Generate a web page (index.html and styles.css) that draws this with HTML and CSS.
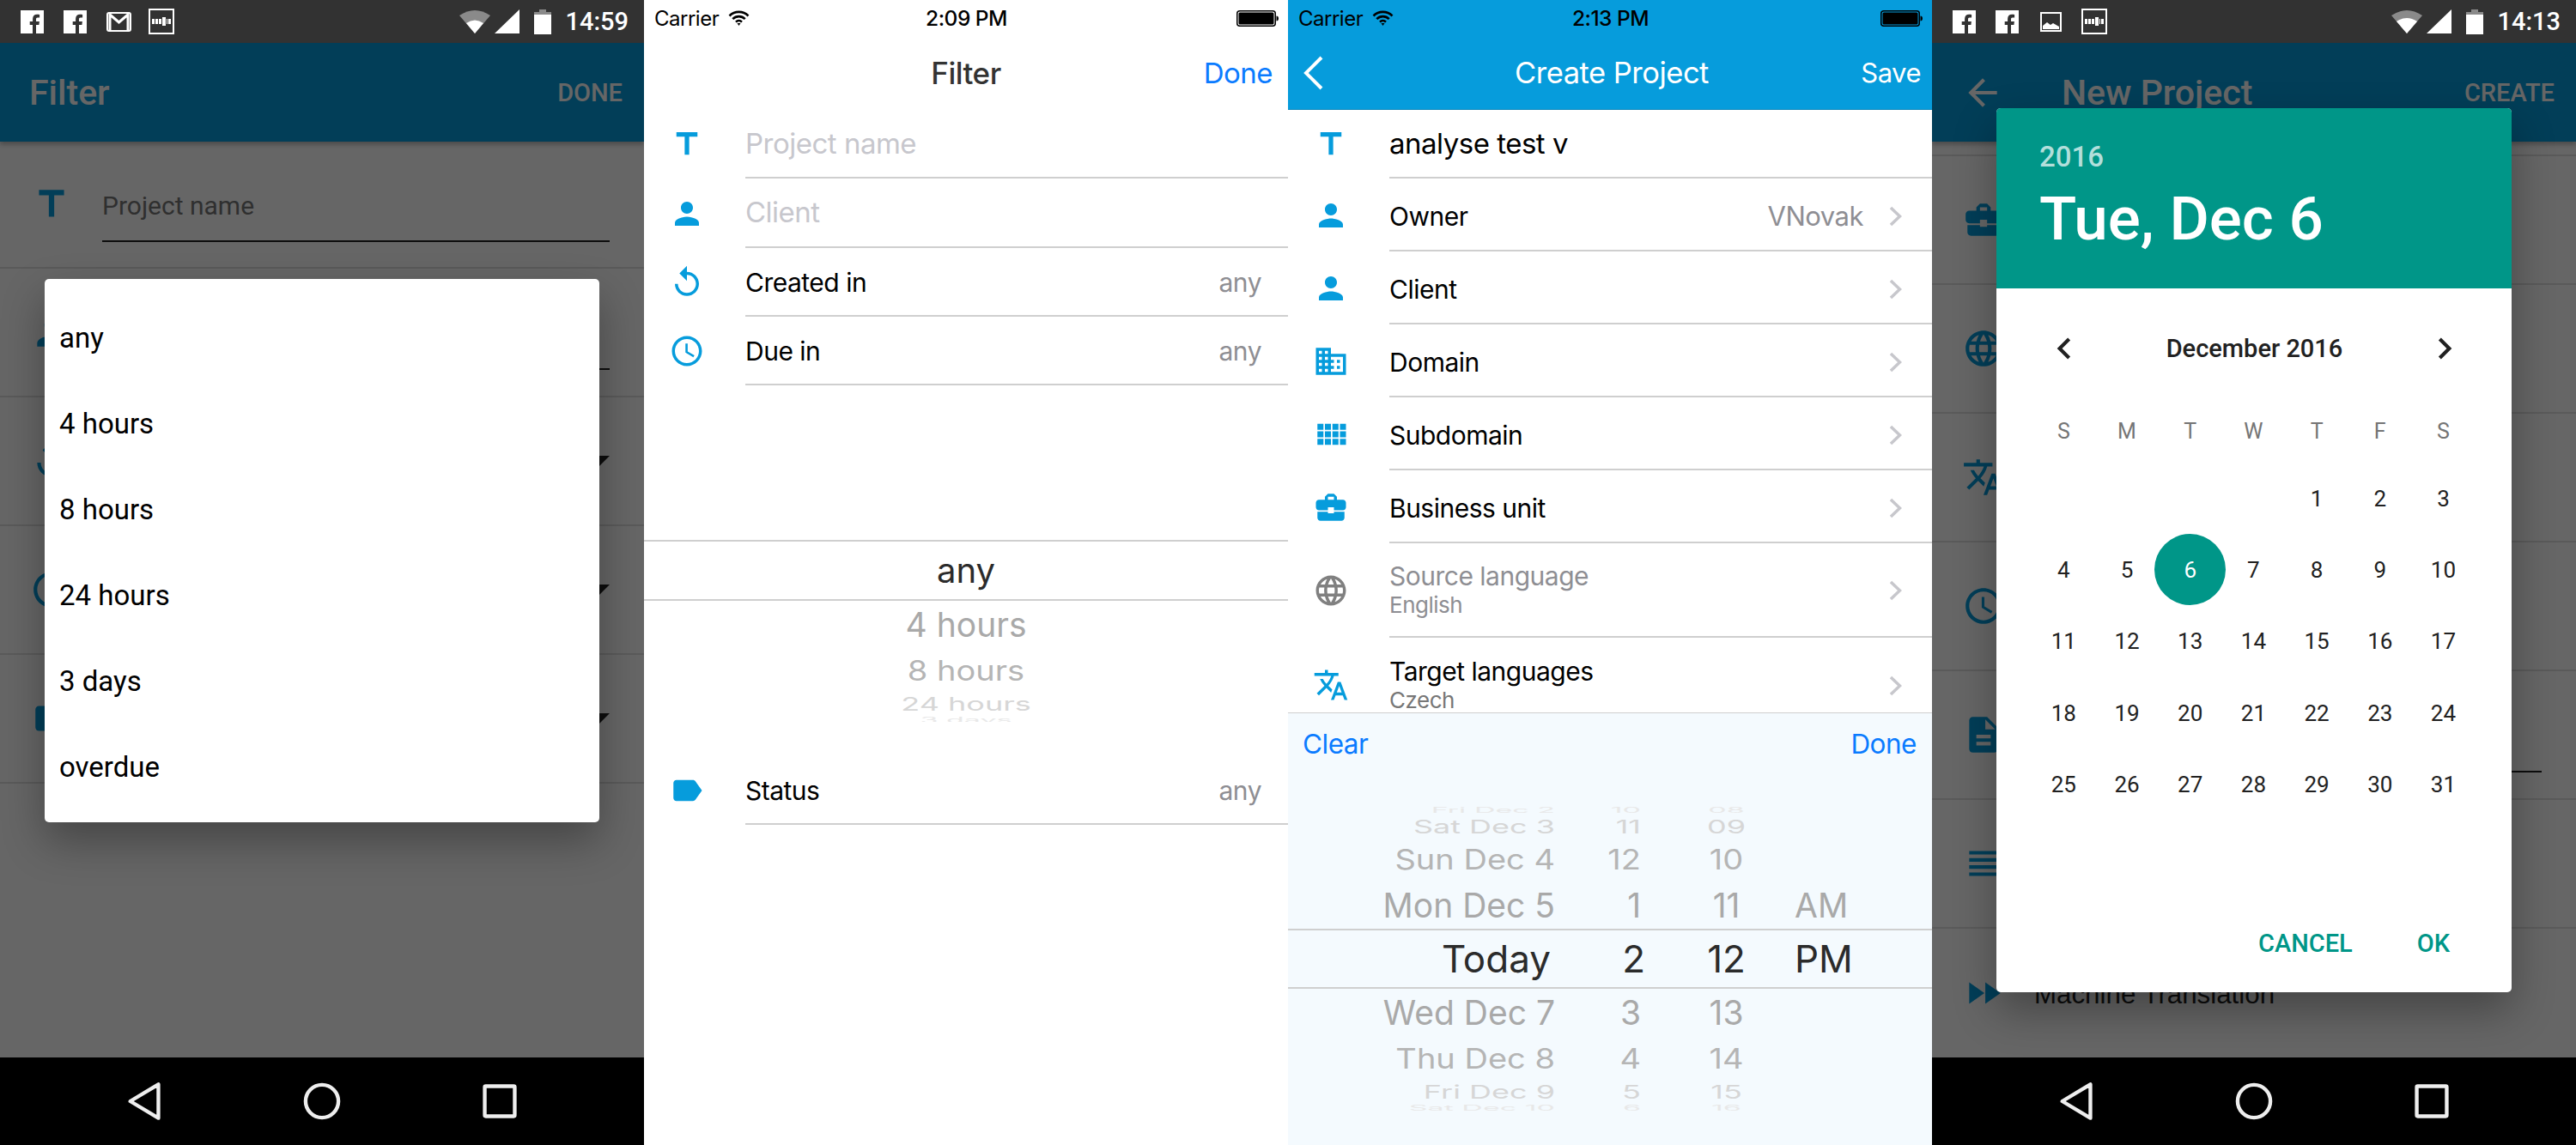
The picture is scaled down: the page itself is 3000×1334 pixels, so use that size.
FILE: index.html
```html
<!DOCTYPE html>
<html lang="en">
<head>
    <meta charset="UTF-8" />
    <title>Project screens</title>
    <link rel="stylesheet" href="styles.css">
</head>
<body>

<svg class="sprite" xmlns="http://www.w3.org/2000/svg">
    <symbol id="i-title" viewBox="0 0 24 24"><path d="M5 4v3h5.500v12h3V7H19V4z"/></symbol>
    <symbol id="i-person" viewBox="0 0 24 24"><path d="M12 12c2.210 0 4-1.790 4-4s-1.790-4-4-4-4 1.790-4 4 1.790 4 4 4zm0 2c-2.670 0-8 1.340-8 4v2h16v-2c0-2.660-5.330-4-8-4z"/></symbol>
    <symbol id="i-replay" viewBox="0 0 24 24"><path d="M12 5V1L7 6l5 5V7c3.310 0 6 2.690 6 6s-2.690 6-6 6-6-2.690-6-6H4c0 4.420 3.580 8 8 8s8-3.580 8-8-3.580-8-8-8z"/></symbol>
    <symbol id="i-clock" viewBox="0 0 24 24"><path d="M11.990 2C6.470 2 2 6.480 2 12s4.470 10 9.990 10C17.520 22 22 17.520 22 12S17.520 2 11.990 2zM12 20c-4.420 0-8-3.580-8-8s3.580-8 8-8 8 3.580 8 8-3.580 8-8 8zm.5-13H11v6l5.250 3.150.75-1.230-4.500-2.670z"/></symbol>
    <symbol id="i-label" viewBox="0 0 24 24"><path d="M17.630 5.840C17.270 5.330 16.670 5 16 5L5 5.010C3.900 5.010 3 5.900 3 7v10c0 1.100.9 1.990 2 1.990L16 19c.67 0 1.270-.33 1.630-.84L22 12l-4.370-6.160z"/></symbol>
    <symbol id="i-domain" viewBox="0 0 24 24"><path d="M12 7V3H2v18h20V7H12zM6 19H4v-2h2v2zm0-4H4v-2h2v2zm0-4H4V9h2v2zm0-4H4V5h2v2zm4 12H8v-2h2v2zm0-4H8v-2h2v2zm0-4H8V9h2v2zm0-4H8V5h2v2zm10 12h-8v-2h2v-2h-2v-2h2v-2h-2V9h8v10zm-2-8h-2v2h2v-2zm0 4h-2v2h2v-2z"/></symbol>
    <symbol id="i-grid" viewBox="0 0 24 24"><path d="M3 9h4V5H3v4zm0 5h4v-4H3v4zm5 0h4v-4H8v4zm5 0h4v-4h-4v4zM8 9h4V5H8v4zm5-4v4h4V5h-4zm5 9h4v-4h-4v4zM3 19h4v-4H3v4zm5 0h4v-4H8v4zm5 0h4v-4h-4v4zm5 0h4v-4h-4v4zm0-14v4h4V5h-4z"/></symbol>
    <symbol id="i-case" viewBox="0 0 24 24"><path d="M10 16v-1H3.010L3 19c0 1.110.89 2 2 2h14c1.110 0 2-.89 2-2v-4h-7v1h-4zm10-9h-4.010V5l-2-2h-4l-2 2v2H4c-1.100 0-2 .9-2 2v3c0 1.110.89 2 2 2h6v-2h4v2h6c1.100 0 2-.9 2-2V9c0-1.100-.9-2-2-2zm-6 0h-4V5h4v2z"/></symbol>
    <symbol id="i-globe" viewBox="0 0 24 24"><path d="M11.990 2C6.470 2 2 6.480 2 12s4.470 10 9.990 10C17.520 22 22 17.520 22 12S17.520 2 11.990 2zm6.930 6h-2.950c-.32-1.250-.78-2.450-1.380-3.560 1.840.63 3.370 1.910 4.330 3.560zM12 4.040c.83 1.200 1.480 2.530 1.910 3.960h-3.820c.43-1.430 1.080-2.760 1.910-3.960zM4.260 14C4.100 13.360 4 12.690 4 12s.1-1.360.26-2h3.380c-.08.66-.14 1.320-.14 2 0 .68.06 1.340.14 2H4.260zm.82 2h2.950c.32 1.250.78 2.450 1.380 3.560-1.840-.63-3.370-1.900-4.330-3.560zm2.950-8H5.080c.96-1.660 2.490-2.930 4.330-3.560C8.810 5.550 8.350 6.750 8.030 8zM12 19.960c-.83-1.200-1.480-2.530-1.910-3.960h3.820c-.43 1.430-1.080 2.760-1.910 3.960zM14.340 14H9.660c-.09-.66-.16-1.320-.16-2 0-.68.07-1.350.16-2h4.680c.09.65.16 1.320.16 2 0 .68-.07 1.340-.16 2zm.25 5.560c.6-1.110 1.060-2.310 1.380-3.560h2.950c-.96 1.650-2.490 2.930-4.330 3.560zM16.360 14c.08-.66.14-1.320.14-2 0-.68-.06-1.340-.14-2h3.380c.16.64.26 1.310.26 2s-.1 1.360-.26 2h-3.380z"/></symbol>
    <symbol id="i-translate" viewBox="0 0 24 24"><path d="M12.870 15.070l-2.540-2.510.03-.03c1.740-1.940 2.980-4.170 3.710-6.530H17V4h-7V2H8v2H1v1.990h11.170C11.500 7.920 10.440 9.750 9 11.350 8.070 10.320 7.300 9.190 6.690 8h-2c.73 1.630 1.730 3.170 2.980 4.560l-5.090 5.020L4 19l5-5 3.110 3.110.76-2.040zM18.500 10h-2L12 22h2l1.120-3h4.750L21 22h2l-4.500-12zm-2.620 7l1.620-4.330L19.120 17h-3.240z"/></symbol>
    <symbol id="i-doc" viewBox="0 0 24 24"><path d="M14 2H6c-1.100 0-1.990.9-1.990 2L4 20c0 1.100.89 2 1.990 2H18c1.100 0 2-.9 2-2V8l-6-6zm2 16H8v-2h8v2zm0-4H8v-2h8v2zm-3-5V3.500L18.500 9H13z"/></symbol>
    <symbol id="i-lines" viewBox="0 0 24 24"><path d="M4 15h16v-2H4v2zm0 4h16v-2H4v2zm0-8h16V9H4v2zm0-6v2h16V5H4z"/></symbol>
    <symbol id="i-forward" viewBox="0 0 24 24"><path d="M4 18l8.500-6L4 6v12zm9-12v12l8.500-6L13 6z"/></symbol>
    <symbol id="i-arrow-back" viewBox="0 0 24 24"><path d="M20 11H7.830l5.590-5.590L12 4l-8 8 8 8 1.410-1.410L7.830 13H20v-2z"/></symbol>
    <symbol id="i-prev" viewBox="0 0 24 24"><path d="M15.410 7.410L14 6l-6 6 6 6 1.410-1.410L10.830 12z"/></symbol>
    <symbol id="i-next" viewBox="0 0 24 24"><path d="M10 6L8.590 7.410 13.170 12l-4.580 4.590L10 18l6-6z"/></symbol>
    <symbol id="i-chevron" viewBox="0 0 15 24"><path d="M2 2l10.500 10L2 22" fill="none" stroke="#c7c7cc" stroke-width="3.500"/></symbol>

    <symbol id="s-fb" viewBox="0 0 27 27"><path fill-rule="evenodd" fill="#fff" d="M0 0h27v27H0z M18 27V17h3.400l.5-4H18v-2.500c0-1.200.3-2 2-2h2.100V5c-.4 0-1.600-.2-3-.2-3 0-5 1.800-5 5.200v3h-3.400v4H14v10z"/></symbol>
    <symbol id="s-mail" viewBox="0 0 29 23"><rect x="1" y="1" width="27" height="21" rx="2" fill="none" stroke="#fff" stroke-width="2"/><path d="M4 21V3l10.500 9L25 3v18" fill="none" stroke="#fff" stroke-width="3"/></symbol>
    <symbol id="s-photo" viewBox="0 0 25 23"><rect x="1" y="1" width="23" height="21" fill="none" stroke="#fff" stroke-width="2"/><path fill="#fff" d="M3 20v-4l5-4 4 3 3-2 7 4v3z"/></symbol>
    <symbol id="s-box" viewBox="0 0 30 30"><rect x="1" y="1" width="28" height="28" fill="none" stroke="#fff" stroke-width="2"/><path fill="#fff" d="M4 12h3v6H4zm4 0h3v6H8zm4 0h3v6h-3zm4-2h4v10h-4zm5 2h1v6h-1zm2 0h3v6h-3z"/></symbol>
    <symbol id="s-wifi" viewBox="0 0 36 28"><path fill="#8a8a8a" d="M0 7Q18-5 36 7L18 28z"/><path class="wifi-level" fill="#fff" d="M8 16Q18 9 28 16L18 28z"/></symbol>
    <symbol id="s-wifi-full" viewBox="0 0 36 28"><path fill="#8a8a8a" d="M0 7Q18-5 36 7L18 28z"/><path fill="#fff" d="M6 14Q18 6 30 14L18 28z"/></symbol>
    <symbol id="s-signal" viewBox="0 0 29 28"><path fill="#fff" d="M29 0v28H0z"/></symbol>
    <symbol id="s-battery" viewBox="0 0 20 29"><path fill="#8a8a8a" d="M6 0h8v3h6v5H0V3h6z"/><path fill="#fff" d="M0 6h20v23H0z"/></symbol>
    <symbol id="s-ios-wifi" viewBox="0 0 25 18"><path d="M1.500 6.500a15.500 15.500 0 0 1 22 0M5.300 10.200a10 10 0 0 1 14.400 0M9 13.600a5 5 0 0 1 7 0" fill="none" stroke="#000" stroke-width="2.600"/><path d="M10.500 15h4l-2 3z"/></symbol>
    <symbol id="s-ios-battery" viewBox="0 0 49 19"><rect x=".75" y=".75" width="44.500" height="17.500" rx="3" fill="none" stroke="#000" stroke-width="1.500"/><rect x="2.500" y="2.500" width="41" height="14" rx="1.500"/><path d="M46.500 6.500c1.500 0 2.500 1 2.500 3s-1 3-2.500 3z"/></symbol>
</svg>

<div class="screens">

    <!-- android filter, select dialog open -->
    <section class="screen android">
        <div class="an-status">
            <svg class="st-fb"><use href="#s-fb"/></svg>
            <svg class="st-fb"><use href="#s-fb"/></svg>
            <svg class="st-mail"><use href="#s-mail"/></svg>
            <svg class="st-box"><use href="#s-box"/></svg>
            <div class="st-right">
                <svg class="st-wifi"><use href="#s-wifi"/></svg>
                <svg class="st-signal"><use href="#s-signal"/></svg>
                <svg class="st-battery"><use href="#s-battery"/></svg>
                <span class="st-time">14:59</span>
            </div>
        </div>
        <div class="an-main">
            <header class="an-toolbar">
                <h1 class="an-title">Filter</h1>
                <span class="an-action">DONE</span>
            </header>
            <div class="an-row an-row-first">
                <svg class="an-icon"><use href="#i-title"/></svg>
                <div class="an-field"><span class="an-placeholder">Project name</span></div>
            </div>
            <div class="an-row">
                <svg class="an-icon"><use href="#i-person"/></svg>
                <div class="an-field"></div>
            </div>
            <div class="an-row">
                <svg class="an-icon"><use href="#i-replay"/></svg>
                <i class="an-caret"></i>
            </div>
            <div class="an-row">
                <svg class="an-icon"><use href="#i-clock"/></svg>
                <i class="an-caret"></i>
            </div>
            <div class="an-row">
                <svg class="an-icon"><use href="#i-label"/></svg>
                <i class="an-caret"></i>
            </div>
            <div class="scrim"></div>
            <ul class="select-dialog">
                <li>any</li>
                <li>4 hours</li>
                <li>8 hours</li>
                <li>24 hours</li>
                <li>3 days</li>
                <li>overdue</li>
            </ul>
        </div>
        <nav class="an-nav">
            <svg class="nav-icon" viewBox="0 0 40 44"><path d="M36 4v36L6 22z"/></svg>
            <svg class="nav-icon" viewBox="0 0 40 44"><circle cx="20" cy="22" r="17.500"/></svg>
            <svg class="nav-icon" viewBox="0 0 40 44"><rect x="4" y="6" width="32" height="32" rx="1"/></svg>
        </nav>
    </section>

    <!-- ios filter, wheel open -->
    <section class="screen ios">
        <div class="ios-status">
            <div class="ios-carrier">Carrier <svg class="ios-wifi"><use href="#s-ios-wifi"/></svg></div>
            <div class="ios-clock">2:09 PM</div>
            <svg class="ios-battery"><use href="#s-ios-battery"/></svg>
        </div>
        <div class="ios-nav">
            <span></span>
            <h1 class="ios-title">Filter</h1>
            <span class="ios-done">Done</span>
        </div>
        <div class="ios-row">
            <svg class="ios-icon"><use href="#i-title"/></svg>
            <div class="ios-body"><span class="ios-placeholder">Project name</span></div>
        </div>
        <div class="ios-row ios-row-wide">
            <svg class="ios-icon"><use href="#i-person"/></svg>
            <div class="ios-body"><span class="ios-placeholder">Client</span></div>
        </div>
        <div class="ios-row">
            <svg class="ios-icon"><use href="#i-replay"/></svg>
            <div class="ios-body"><span>Created in</span><span class="ios-value">any</span></div>
        </div>
        <div class="ios-row">
            <svg class="ios-icon"><use href="#i-clock"/></svg>
            <div class="ios-body"><span>Due in</span><span class="ios-value">any</span></div>
        </div>
        <div class="wheel wheel-single">
            <div class="w0 wheel-sel"><span>any</span></div>
            <div class="w1"><span>4 hours</span></div>
            <div class="w2"><span>8 hours</span></div>
            <div class="w3"><span>24 hours</span></div>
            <div class="w4"><span>3 days</span></div>
        </div>
        <div class="ios-row">
            <svg class="ios-icon"><use href="#i-label"/></svg>
            <div class="ios-body"><span>Status</span><span class="ios-value">any</span></div>
        </div>
    </section>

    <!-- ios create project, date wheel open -->
    <section class="screen ios">
        <div class="ios-blue">
            <div class="ios-status">
                <div class="ios-carrier">Carrier <svg class="ios-wifi"><use href="#s-ios-wifi"/></svg></div>
                <div class="ios-clock">2:13 PM</div>
                <svg class="ios-battery"><use href="#s-ios-battery"/></svg>
            </div>
            <div class="ios-nav ios-nav-blue">
                <svg class="ios-back" viewBox="0 0 24 40"><path d="M22 2L4 20l18 18"/></svg>
                <h1 class="ios-title">Create Project</h1>
                <span class="ios-save">Save</span>
            </div>
        </div>
        <div class="ios-list">
            <div class="ios-row">
                <svg class="ios-icon"><use href="#i-title"/></svg>
                <div class="ios-body"><span class="ios-input">analyse test v</span></div>
            </div>
            <div class="ios-row ios-row-link">
                <svg class="ios-icon"><use href="#i-person"/></svg>
                <div class="ios-body"><span>Owner</span><span class="ios-owner">VNovak</span><svg class="ios-chevron"><use href="#i-chevron"/></svg></div>
            </div>
            <div class="ios-row ios-row-link">
                <svg class="ios-icon"><use href="#i-person"/></svg>
                <div class="ios-body"><span>Client</span><svg class="ios-chevron"><use href="#i-chevron"/></svg></div>
            </div>
            <div class="ios-row ios-row-link">
                <svg class="ios-icon"><use href="#i-domain"/></svg>
                <div class="ios-body"><span>Domain</span><svg class="ios-chevron"><use href="#i-chevron"/></svg></div>
            </div>
            <div class="ios-row ios-row-link">
                <svg class="ios-icon"><use href="#i-grid"/></svg>
                <div class="ios-body"><span>Subdomain</span><svg class="ios-chevron"><use href="#i-chevron"/></svg></div>
            </div>
            <div class="ios-row ios-row-link">
                <svg class="ios-icon"><use href="#i-case"/></svg>
                <div class="ios-body"><span>Business unit</span><svg class="ios-chevron"><use href="#i-chevron"/></svg></div>
            </div>
            <div class="ios-row ios-row-two">
                <svg class="ios-icon ios-icon-off"><use href="#i-globe"/></svg>
                <div class="ios-body">
                    <div class="ios-two ios-two-off"><span>Source language</span><small>English</small></div>
                    <svg class="ios-chevron"><use href="#i-chevron"/></svg>
                </div>
            </div>
            <div class="ios-row ios-row-two">
                <svg class="ios-icon"><use href="#i-translate"/></svg>
                <div class="ios-body">
                    <div class="ios-two"><span>Target languages</span><small>Czech</small></div>
                    <svg class="ios-chevron"><use href="#i-chevron"/></svg>
                </div>
            </div>
        </div>
        <div class="date-picker">
            <div class="date-bar"><span>Clear</span><span>Done</span></div>
            <div class="wheel wheel-date">
                <div class="w4 up"><span>Fri Dec 2</span><span>10</span><span>08</span><span></span></div>
                <div class="w3 up"><span>Sat Dec 3</span><span>11</span><span>09</span><span></span></div>
                <div class="w2 up"><span>Sun Dec 4</span><span>12</span><span>10</span><span></span></div>
                <div class="w1"><span>Mon Dec 5</span><span>1</span><span>11</span><span>AM</span></div>
                <div class="w0 wheel-sel"><span>Today</span><span>2</span><span>12</span><span>PM</span></div>
                <div class="w1"><span>Wed Dec 7</span><span>3</span><span>13</span><span></span></div>
                <div class="w2"><span>Thu Dec 8</span><span>4</span><span>14</span><span></span></div>
                <div class="w3"><span>Fri Dec 9</span><span>5</span><span>15</span><span></span></div>
                <div class="w4"><span>Sat Dec 10</span><span>6</span><span>16</span><span></span></div>
            </div>
        </div>
    </section>

    <!-- android new project, calendar dialog open -->
    <section class="screen android">
        <div class="an-status">
            <svg class="st-fb"><use href="#s-fb"/></svg>
            <svg class="st-fb"><use href="#s-fb"/></svg>
            <svg class="st-photo"><use href="#s-photo"/></svg>
            <svg class="st-box"><use href="#s-box"/></svg>
            <div class="st-right">
                <svg class="st-wifi"><use href="#s-wifi-full"/></svg>
                <svg class="st-signal"><use href="#s-signal"/></svg>
                <svg class="st-battery"><use href="#s-battery"/></svg>
                <span class="st-time">14:13</span>
            </div>
        </div>
        <div class="an-main">
            <header class="an-toolbar">
                <svg class="an-back"><use href="#i-arrow-back"/></svg>
                <h1 class="an-title">New Project</h1>
                <span class="an-action">CREATE</span>
            </header>
            <div class="an-row an-row-cut"></div>
            <div class="an-row"><svg class="an-icon"><use href="#i-case"/></svg></div>
            <div class="an-row"><svg class="an-icon"><use href="#i-globe"/></svg></div>
            <div class="an-row"><svg class="an-icon"><use href="#i-translate"/></svg></div>
            <div class="an-row"><svg class="an-icon"><use href="#i-clock"/></svg></div>
            <div class="an-row">
                <svg class="an-icon"><use href="#i-doc"/></svg>
                <div class="an-field"></div>
            </div>
            <div class="an-row"><svg class="an-icon"><use href="#i-lines"/></svg></div>
            <div class="an-row an-row-last">
                <svg class="an-icon"><use href="#i-forward"/></svg>
                <span class="an-text">Machine Translation</span>
            </div>
            <div class="scrim"></div>
            <div class="cal-dialog">
                <div class="cal-head">
                    <div class="cal-year">2016</div>
                    <div class="cal-date">Tue, Dec 6</div>
                </div>
                <div class="cal-month">
                    <svg class="cal-arrow"><use href="#i-prev"/></svg>
                    <span>December 2016</span>
                    <svg class="cal-arrow"><use href="#i-next"/></svg>
                </div>
                <div class="cal-week">
                    <span>S</span><span>M</span><span>T</span><span>W</span><span>T</span><span>F</span><span>S</span>
                </div>
                <div class="cal-days">
                    <span></span><span></span><span></span><span></span><span>1</span><span>2</span><span>3</span>
                    <span>4</span><span>5</span><span class="cal-today">6</span><span>7</span><span>8</span><span>9</span><span>10</span>
                    <span>11</span><span>12</span><span>13</span><span>14</span><span>15</span><span>16</span><span>17</span>
                    <span>18</span><span>19</span><span>20</span><span>21</span><span>22</span><span>23</span><span>24</span>
                    <span>25</span><span>26</span><span>27</span><span>28</span><span>29</span><span>30</span><span>31</span>
                </div>
                <div class="cal-actions"><span>CANCEL</span><span>OK</span></div>
            </div>
        </div>
        <nav class="an-nav">
            <svg class="nav-icon" viewBox="0 0 40 44"><path d="M36 4v36L6 22z"/></svg>
            <svg class="nav-icon" viewBox="0 0 40 44"><circle cx="20" cy="22" r="17.500"/></svg>
            <svg class="nav-icon" viewBox="0 0 40 44"><rect x="4" y="6" width="32" height="32" rx="1"/></svg>
        </nav>
    </section>

</div>

</body>
</html>
```

FILE: styles.css
```css
* {
    box-sizing: border-box;
}
html, body {
    margin: 0;
    background: #fff;
}
h1 {
    margin: 0;
    font: inherit;
}
.sprite {
    display: none;
}
.screens {
    display: grid;
    grid-template-columns: repeat(4, 750px);
    width: 3000px;
    height: 1334px;
    overflow: hidden;
}
.screen {
    display: flex;
    flex-direction: column;
    height: 1334px;
    overflow: hidden;
}

/* android */
.android {
    font-family: Roboto, sans-serif;
    background: #fff;
}
.an-status {
    display: flex;
    align-items: center;
    flex: none;
    height: 50px;
    padding: 0 18px 0 24px;
    background: #323232;
}
.st-fb {
    width: 27px;
    height: 27px;
    margin-right: 23px;
}
.st-mail {
    width: 29px;
    height: 23px;
    margin-right: 20px;
}
.st-photo {
    width: 25px;
    height: 23px;
    margin: 0 23px 0 2px;
}
.st-box {
    width: 30px;
    height: 30px;
}
.st-right {
    display: flex;
    align-items: center;
    margin-left: auto;
}
.st-wifi {
    width: 36px;
    height: 28px;
    margin-right: 5px;
}
.st-signal {
    width: 29px;
    height: 28px;
    margin-right: 17px;
}
.st-battery {
    width: 20px;
    height: 29px;
    margin-right: 16px;
}
.st-time {
    color: #fff;
    font-size: 29px;
    font-weight: 500;
}
.an-main {
    position: relative;
    flex: 1;
    overflow: hidden;
}
.an-toolbar {
    display: flex;
    align-items: center;
    height: 115px;
    padding: 0 25px 0 34px;
    background: #069cdc;
    color: #fff;
    box-shadow: 0 3px 6px rgba(0,0,0,0.3);
}
.an-back {
    width: 50px;
    height: 50px;
    margin-right: 67px;
    fill: #fff;
}
.an-title {
    font-size: 41px;
    font-weight: 500;
}
.an-action {
    margin-left: auto;
    font-size: 29px;
    font-weight: 500;
}
.an-row {
    display: flex;
    align-items: center;
    height: 150px;
    padding: 0 40px 0 35px;
    border-bottom: 2px solid #e0e0e0;
}
.an-row-first {
    height: 148px;
}
.an-row-cut {
    height: 17px;
}
.an-row-last {
    border-bottom: 0;
}
.an-icon {
    flex: none;
    width: 50px;
    height: 50px;
    fill: #069cdc;
}
.an-field {
    display: flex;
    align-items: center;
    align-self: flex-start;
    flex: 1;
    height: 118px;
    margin-left: 34px;
    padding-top: 33px;
    border-bottom: 2px solid #222;
}
.an-row-first .an-field {
    height: 117px;
}
.an-placeholder {
    color: #777;
    font-size: 30px;
}
.an-text {
    margin: 4px 0 0 34px;
    color: #222;
    font-family: "Liberation Sans", sans-serif;
    font-size: 31.300px;
}
.an-caret {
    width: 0;
    height: 0;
    margin-left: auto;
    border-top: 12px solid #222;
    border-left: 12px solid transparent;
    border-right: 12px solid transparent;
}
.scrim {
    position: absolute;
    inset: 0;
    background: rgba(0,0,0,0.6);
}
.an-nav {
    display: flex;
    flex: none;
    align-items: center;
    justify-content: space-between;
    height: 102px;
    padding: 0 146px 0 145px;
    background: #000;
}
.nav-icon {
    width: 44px;
    height: 48px;
    fill: none;
    stroke: #eee;
    stroke-width: 4;
    stroke-linejoin: round;
}

/* select dialog */
.select-dialog {
    position: absolute;
    top: 275px;
    left: 52px;
    width: 646px;
    height: 633px;
    margin: 0;
    padding: 18px 0 0 17px;
    list-style: none;
    background: #fff;
    border-radius: 5px;
    color: #000;
    font-size: 33px;
    box-shadow: 0 22px 50px rgba(0,0,0,0.32);
}
.select-dialog li {
    display: flex;
    align-items: center;
    height: 100px;
}

/* calendar dialog */
.cal-dialog {
    position: absolute;
    top: 76px;
    left: 75px;
    display: flex;
    flex-direction: column;
    width: 600px;
    height: 1030px;
    background: #fff;
    border-radius: 5px;
    overflow: visible;
    box-shadow: 0 22px 50px rgba(0,0,0,0.32);
}
.cal-head {
    height: 210px;
    padding: 38px 50px 0;
    background: #009688;
    border-radius: 5px 5px 0 0;
    color: #fff;
}
.cal-year {
    color: #b2dfdb;
    font-size: 33px;
    font-weight: 500;
    line-height: 38px;
}
.cal-date {
    margin-top: 11px;
    font-size: 71px;
    font-weight: 500;
    line-height: 84px;
}
.cal-month {
    display: flex;
    align-items: center;
    justify-content: space-between;
    height: 60px;
    margin-top: 40px;
    padding: 0 53px 0 54px;
    color: #212121;
    font-size: 29px;
    font-weight: 500;
}
.cal-arrow {
    width: 50px;
    height: 50px;
    fill: #212121;
}
.cal-week, .cal-days {
    display: grid;
    grid-template-columns: repeat(7, 73.7px);
    margin-left: 41.5px;
    text-align: center;
}
.cal-week {
    height: 70px;
    margin-top: 31px;
    color: #757575;
    font-size: 25px;
    align-items: center;
}
.cal-days {
    grid-auto-rows: 83.4px;
    margin-top: 2px;
    color: #212121;
    font-size: 26px;
}
.cal-days span {
    display: flex;
    align-items: center;
    justify-content: center;
}
.cal-days .cal-today {
    width: 83px;
    height: 83px;
    margin-left: -4.6px;
    background: #009688;
    border-radius: 50%;
    color: #fff;
}
.cal-actions {
    display: flex;
    justify-content: flex-end;
    gap: 75px;
    margin-top: auto;
    padding: 0 72px 42px 0;
    color: #009688;
    font-size: 29px;
    font-weight: 500;
    line-height: 30px;
}

/* ios */
.ios {
    font-family: Inter, sans-serif;
    background: #fff;
    color: #000;
    font-size: 30px;
    letter-spacing: -0.5px;
}
.ios-status {
    display: grid;
    grid-template-columns: 1fr auto 1fr;
    align-items: center;
    height: 42px;
    padding: 0 11px 0 12px;
    color: #000;
    font-size: 24px;
}
.ios-carrier {
    display: flex;
    align-items: center;
    gap: 11px;
}
.ios-wifi {
    width: 25px;
    height: 18px;
}
.ios-clock {
    font-size: 24.500px;
    font-weight: 500;
}
.ios-battery {
    justify-self: end;
    width: 49px;
    height: 19px;
}
.ios-nav {
    display: grid;
    grid-template-columns: 1fr auto 1fr;
    align-items: center;
    height: 86px;
    padding: 0 18px;
}
.ios-title {
    font-size: 35px;
    font-weight: 500;
    color: #333;
}
.ios-done {
    justify-self: end;
    color: #0a7bff;
    font-size: 33px;
}
.ios-blue {
    background: #069cdc;
    border-bottom: 1px solid #0785ba;
    height: 128px;
}
.ios-nav-blue {
    height: 85px;
    padding: 0 13px 0 17px;
}
.ios-nav-blue .ios-title {
    color: #fff;
    font-size: 34.500px;
    font-weight: 400;
}
.ios-save {
    justify-self: end;
    color: #fff;
    font-size: 31px;
}
.ios-back {
    width: 24px;
    height: 40px;
    fill: none;
    stroke: #fff;
    stroke-width: 4;
}
.ios-row {
    display: flex;
    height: 80px;
    flex: none;
}
.ios-row-wide {
    height: 81px;
}
.ios-row-link {
    height: 85px;
}
.ios-row-two {
    height: 110px;
}
.ios-icon {
    flex: none;
    width: 42px;
    height: 42px;
    margin: auto 47px auto 29px;
    fill: #069cdc;
}
.ios-icon-off {
    fill: #808080;
}
.ios-body {
    display: flex;
    flex: 1;
    align-items: center;
    justify-content: space-between;
    padding: 2px 31px 0 0;
    border-bottom: 2px solid #cfcfcf;
}
.ios-row-link .ios-body {
    padding-top: 4px;
}
.ios-placeholder {
    margin-top: -3px;
    color: #c7c7cd;
    font-size: 33px;
}
.ios-input {
    margin-top: -3px;
    font-size: 33px;
}
.ios-value {
    color: #8e8e93;
}
.ios-owner {
    margin-left: auto;
    color: #8e8e93;
    font-size: 31px;
}
.ios-chevron {
    flex: none;
    width: 15px;
    height: 24px;
    margin: 0 4px 0 30px;
}
.ios-two {
    display: flex;
    flex-direction: column;
    margin-right: auto;
    line-height: 33px;
}
.ios-two small {
    color: #777;
    font-size: 26px;
}
.ios-two-off span {
    color: #8e8e93;
}
.ios-two-off small {
    color: #8e8e93;
}
.ios-list {
    flex: none;
    height: 702px;
    overflow: hidden;
}
.ios-list .ios-row-two:last-child .ios-body {
    border-bottom: 0;
}

/* wheels */
.wheel {
    display: flex;
    flex-direction: column;
    overflow: hidden;
    letter-spacing: 0;
}
.wheel-single {
    margin: 180px 0 40px;
    height: 212px;
    text-align: center;
}
.wheel-single > div {
    display: flex;
    align-items: center;
    justify-content: center;
    flex: none;
}
.wheel-single .w0 {
    height: 71px;
}
.wheel-date {
    margin-top: 0;
    height: 354px;
}
.wheel-date > div {
    display: grid;
    grid-template-columns: 311px 100px 181px 1fr;
    grid-template-rows: minmax(0, 1fr);
    align-items: center;
    flex: none;
}
.wheel-date span:nth-child(1) {
    text-align: right;
}
.wheel-date span:nth-child(2) {
    text-align: right;
}
.wheel-date span:nth-child(3) {
    padding-left: 18px;
    text-align: center;
}
.wheel-date span:nth-child(4) {
    margin-left: -2px;
    text-align: left;
}
.wheel span {
    display: block;
    white-space: nowrap;
}
.w0 {
    height: 70px;
    color: #2b2b2b;
    font-size: 40px;
}
.wheel-sel {
    border-top: 2px solid #cfcfcf;
    border-bottom: 2px solid #cfcfcf;
}
.wheel-date .w0 {
    font-size: 44px;
}
.wheel-date .w0 span:nth-child(1) {
    padding-right: 5px;
}
.wheel-date .w0 span:nth-child(2) {
    transform: translateX(5px);
}
.w1 {
    height: 55px;
    color: #a9a9a9;
    font-size: 39px;
}
.w2 {
    height: 46px;
    padding-top: 6px;
    color: #b5b5b5;
    font-size: 38px;
}
.w2 span {
    transform: scaleY(0.85);
}
.w3 {
    height: 29px;
    padding-top: 8px;
    color: #d6d6d6;
    font-size: 36px;
}
.w3 span {
    transform: scaleY(0.6);
}
.w4 {
    height: 12px;
    color: #e8e8e8;
    font-size: 34px;
}
.w4 span {
    transform: translateY(2px) scaleY(0.25);
}
.w4.up span {
    transform: translateY(-3px) scaleY(0.25);
}
.wheel .up {
    padding-top: 0;
}
.w2.up {
    padding-bottom: 6px;
}
.w3.up {
    padding-bottom: 8px;
}

/* date picker */
.date-picker {
    flex: 1;
    background: #f4fafe;
    border-top: 1px solid #cfcfcf;
}
.date-bar {
    display: flex;
    justify-content: space-between;
    height: 109px;
    padding: 16px 18px 0 17px;
    color: #0a7bff;
    font-size: 31.500px;
    line-height: 40px;
}
```
